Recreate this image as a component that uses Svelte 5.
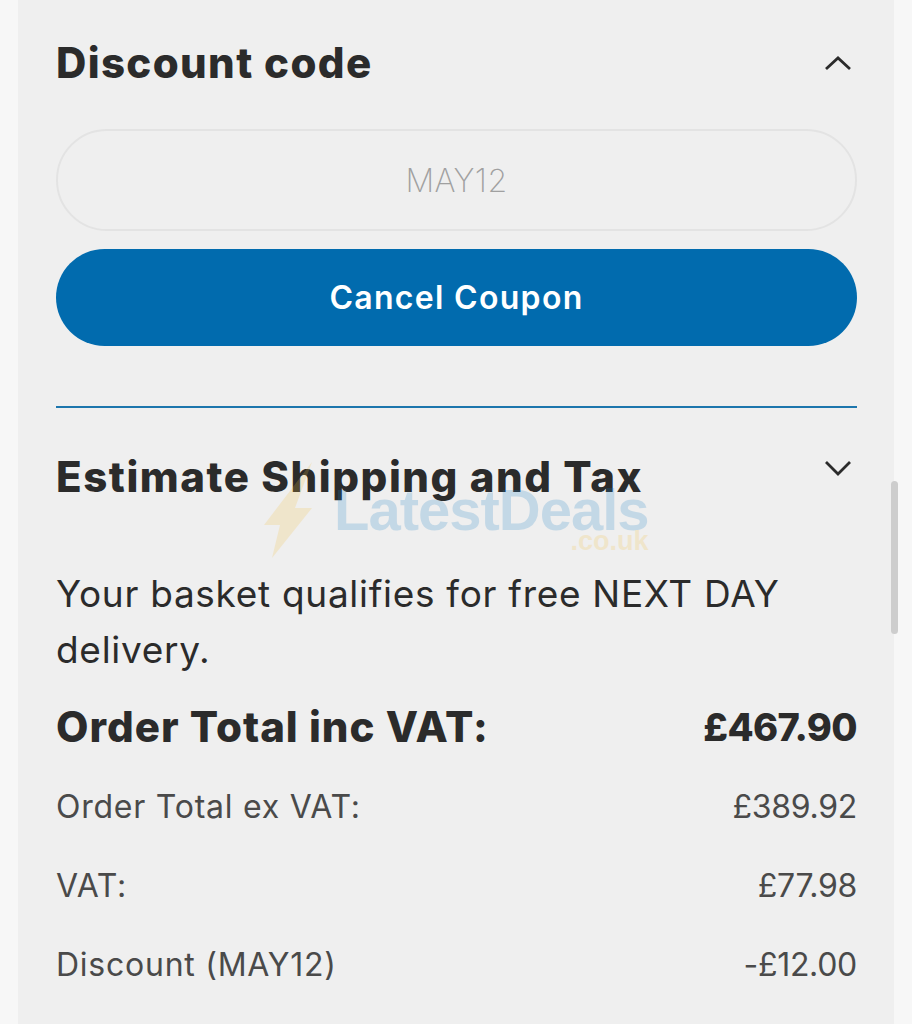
<script>
    const rows = [
        { label: "Order Total ex VAT:", value: "£389.92" },
        { label: "VAT:", value: "£77.98" },
        { label: "Discount (MAY12)", value: "-£12.00" }
    ];
</script>

<div class="page">
    <div class="panel">
        <section class="coupon">
            <div class="head">
                <h2>Discount code</h2>
                <svg class="chevron" viewBox="0 0 28 16" aria-hidden="true">
                    <path d="M2 14 L14 3 L26 14" />
                </svg>
            </div>
            <div class="code">MAY12</div>
            <button type="button">Cancel Coupon</button>
        </section>

        <section class="estimate">
            <div class="head">
                <h2>Estimate Shipping and Tax</h2>
                <svg class="chevron down" viewBox="0 0 28 16" aria-hidden="true">
                    <path d="M2 2 L14 14 L26 2" />
                </svg>
            </div>
            <p>Your basket qualifies for free NEXT DAY delivery.</p>
        </section>

        <div class="total">
            <span>Order Total inc VAT:</span>
            <span class="amount">£467.90</span>
        </div>

        {#each rows as row}
            <div class="row">
                <span class="label">{row.label}</span>
                <span class="value">{row.value}</span>
            </div>
        {/each}
    </div>

    <div class="watermark" aria-hidden="true">
        <svg viewBox="0 0 50 98" class="bolt">
            <path d="M48 0 L0 63 L16 63 L8 96 L48 46 L31 46 Z" />
        </svg>
        <div class="mark-text">
            <span class="mark-name">LatestDeals</span>
            <span class="mark-tld">.co.uk</span>
        </div>
    </div>

    <div class="scrollbar"></div>
</div>

<style>
    :global(body) {
        margin: 0;
        background: #f7f7f7;
    }

    .page {
        position: relative;
        width: 912px;
        height: 1024px;
        overflow: hidden;
        font-family: "Inter", "Liberation Sans", sans-serif;
        color: #2b2b2b;
    }

    .panel {
        margin: 0 18px;
        height: 1024px;
        box-sizing: border-box;
        padding: 38px 37px 0 38px;
        background: #efefef;
    }

    .head {
        display: flex;
        justify-content: space-between;
        align-items: center;
    }

    h2 {
        margin: 0;
        font-size: 42px;
        line-height: 50px;
        font-weight: 800;
        letter-spacing: 1.35px;
    }

    .estimate h2 {
        letter-spacing: 1.55px;
    }

    .chevron {
        width: 28px;
        height: 16px;
        margin-right: 5px;
        fill: none;
        stroke: #2b2b2b;
        stroke-width: 2.8;
    }

    .code {
        margin-top: 41px;
        height: 102px;
        box-sizing: border-box;
        border: 2px solid #e3e3e3;
        border-radius: 51px;
        display: flex;
        align-items: center;
        justify-content: center;
        font-size: 32px;
        font-weight: 200;
        letter-spacing: 0.4px;
        color: #a0a0a0;
    }

    button {
        display: block;
        width: 100%;
        height: 97px;
        margin-top: 18px;
        border: 0;
        border-radius: 49px;
        background: #016bae;
        color: #fff;
        font-family: inherit;
        font-size: 32px;
        font-weight: 600;
        letter-spacing: 1.3px;
    }

    .coupon {
        padding-bottom: 60px;
        border-bottom: 2px solid #1d76ad;
    }

    .estimate .head {
        margin-top: 44px;
    }

    .estimate .chevron {
        margin-top: -18px;
    }

    p {
        margin: 64px 0 0;
        font-size: 37px;
        line-height: 56px;
        letter-spacing: 0.7px;
        font-weight: 400;
    }

    .total {
        display: flex;
        justify-content: space-between;
        align-items: center;
        margin-top: 24px;
        font-size: 42px;
        line-height: 50px;
        font-weight: 800;
        letter-spacing: 1px;
    }

    .amount {
        font-size: 38px;
        letter-spacing: -0.6px;
    }

    .row {
        display: flex;
        justify-content: space-between;
        margin-top: 39px;
        font-size: 32px;
        line-height: 40px;
        color: #4a4a4a;
    }

    .label {
        letter-spacing: 0.75px;
    }

    .value {
        letter-spacing: -0.3px;
    }

    .total + .row {
        margin-top: 35px;
    }

    .watermark {
        position: absolute;
        left: 264px;
        top: 462px;
        display: flex;
        gap: 20px;
        opacity: 0.2;
        pointer-events: none;
    }

    .bolt {
        width: 50px;
        height: 98px;
        fill: #f0c040;
    }

    .mark-text {
        display: flex;
        flex-direction: column;
        align-items: flex-end;
        margin-top: 23px;
        font-family: "Liberation Sans", sans-serif;
        font-weight: 700;
    }

    .mark-name {
        font-size: 58px;
        line-height: 50px;
        color: #1b7fc4;
        letter-spacing: -1px;
    }

    .mark-tld {
        margin-top: -6px;
        font-size: 27px;
        line-height: 24px;
        color: #f0c040;
    }

    .scrollbar {
        position: absolute;
        left: 891px;
        top: 481px;
        width: 7px;
        height: 153px;
        border-radius: 4px;
        background: #cdcdcd;
    }
</style>
